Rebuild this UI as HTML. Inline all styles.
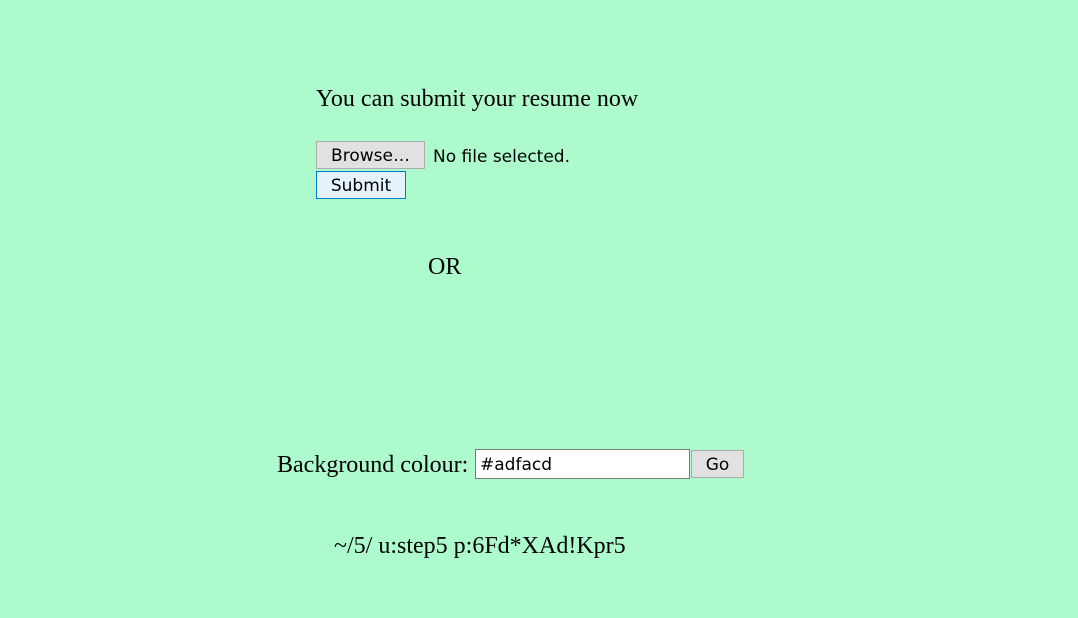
<!DOCTYPE html>
<html><head><meta charset="utf-8"><style>
html,body{margin:0;padding:0;background:#adfacd;width:1078px;height:618px;overflow:hidden;position:relative;font-family:"Liberation Serif",serif;font-size:24px;line-height:28px;color:#000}
.a{position:absolute;white-space:nowrap}
.btn{position:absolute;box-sizing:border-box;border:1px solid #adadad;background:#e1e1e1;font-family:"DejaVu Sans",sans-serif;font-size:17px;text-align:center;line-height:29px}
.ui{font-family:"DejaVu Sans",sans-serif;font-size:17px;line-height:22px}
</style></head><body>
<div class="a" style="left:316px;top:85px">You can submit your resume now</div>
<div class="btn" style="left:316px;top:141px;width:109px;height:28px">Browse…</div>
<div class="a ui" style="left:433px;top:146px">No file selected.</div>
<div class="btn" style="left:316px;top:171px;width:90px;height:28px;border-color:#0078d7;background:#e5f1fb">Submit</div>
<div class="a" style="left:428px;top:253px">OR</div>
<div class="a" style="left:277px;top:451px">Background colour:</div>
<div class="a ui" style="left:475px;top:449px;width:215px;height:30px;box-sizing:border-box;border:1px solid #7a7a7a;background:#fff;padding-left:4px;line-height:30px">#adfacd</div>
<div class="btn" style="left:691px;top:450px;width:53px;height:28px">Go</div>
<div class="a" style="left:334px;top:532px">~/5/ u:step5 p:6Fd*XAd!Kpr5</div>
</body></html>
